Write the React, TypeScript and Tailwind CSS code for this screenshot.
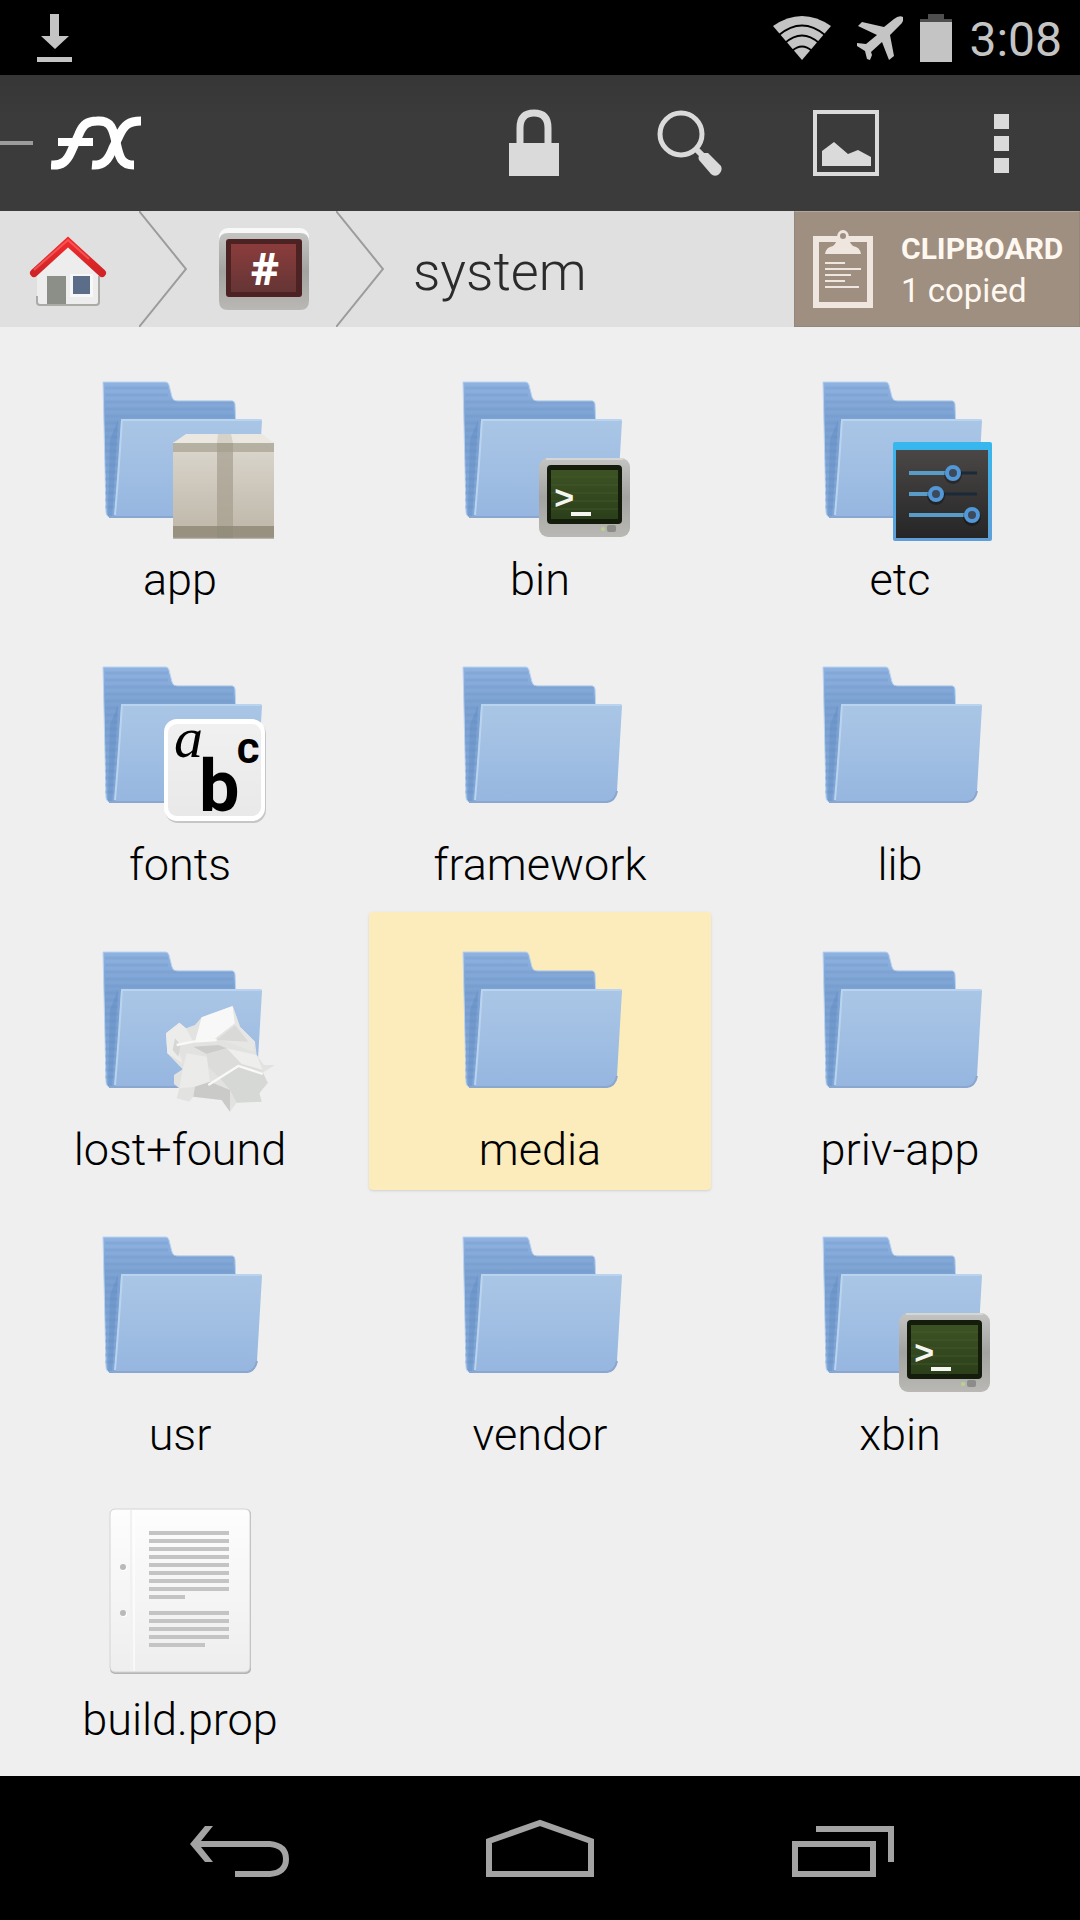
import type { ReactNode } from "react";

type Badge = "box" | "terminal" | "settings" | "fonts" | "paper";

type Entry = {
  name: string;
  badge?: Badge;
  file?: boolean;
  selected?: boolean;
};

const entries: Entry[] = [
  { name: "app", badge: "box" },
  { name: "bin", badge: "terminal" },
  { name: "etc", badge: "settings" },
  { name: "fonts", badge: "fonts" },
  { name: "framework" },
  { name: "lib" },
  { name: "lost+found", badge: "paper" },
  { name: "media", selected: true },
  { name: "priv-app" },
  { name: "usr" },
  { name: "vendor" },
  { name: "xbin", badge: "terminal" },
  { name: "build.prop", file: true },
];

/* ============= Shared gradients ============= */

function Gradients() {
  return (
    <svg className="absolute size-0" aria-hidden="true">
      <defs>
        <linearGradient id="folderBack" x1="0" y1="0" x2="0" y2="1">
          <stop offset="0" stopColor="#8fb2e0" />
          <stop offset="0.3" stopColor="#7aa1d1" />
          <stop offset="1" stopColor="#82a8d8" />
        </linearGradient>
        <linearGradient id="folderFront" x1="0" y1="0" x2="0" y2="1">
          <stop offset="0" stopColor="#aac6e6" />
          <stop offset="0.5" stopColor="#a1bfe3" />
          <stop offset="1" stopColor="#96b6e0" />
        </linearGradient>
        <linearGradient id="cardboard" x1="0" y1="0" x2="0" y2="1">
          <stop offset="0" stopColor="#dcd8ce" />
          <stop offset="0.4" stopColor="#cfc9be" />
          <stop offset="1" stopColor="#bdb6a8" />
        </linearGradient>
        <linearGradient id="bezel" x1="0" y1="0" x2="0" y2="1">
          <stop offset="0" stopColor="#c4c4c2" />
          <stop offset="0.5" stopColor="#a3a3a1" />
          <stop offset="1" stopColor="#b9b8b4" />
        </linearGradient>
        <linearGradient id="greenScreen" x1="0" y1="0" x2="0" y2="1">
          <stop offset="0" stopColor="#3d5224" />
          <stop offset="1" stopColor="#2b401a" />
        </linearGradient>
        <linearGradient id="redScreen" x1="0" y1="0" x2="0" y2="1">
          <stop offset="0" stopColor="#8b3c3c" />
          <stop offset="1" stopColor="#653535" />
        </linearGradient>
        <linearGradient id="panel" x1="0" y1="0" x2="0" y2="1">
          <stop offset="0" stopColor="#4a4746" />
          <stop offset="1" stopColor="#262626" />
        </linearGradient>
        <linearGradient id="panelEdge" x1="0" y1="0" x2="0" y2="1">
          <stop offset="0" stopColor="#35b8ee" />
          <stop offset="1" stopColor="#5f9fd8" />
        </linearGradient>
        <linearGradient id="sheet" x1="0" y1="0" x2="0" y2="1">
          <stop offset="0" stopColor="#fdfdfd" />
          <stop offset="1" stopColor="#eeeeee" />
        </linearGradient>
        <linearGradient id="roof" x1="0" y1="0" x2="0" y2="1">
          <stop offset="0" stopColor="#f02a2c" />
          <stop offset="1" stopColor="#d02426" />
        </linearGradient>
      </defs>
    </svg>
  );
}

/* ============= Folder art ============= */

const folderStripes = [38, 45, 52, 59, 66, 73, 80, 87, 94, 101, 108, 115, 122, 129, 136, 143, 150, 157];

function Folder() {
  return (
    <g>
      <path
        d="M19 32H82Q84 32 85 35L88 47Q89 51 93 51H148Q151 51 151 54L152 80L60 167H27Q22 167 22 162Z"
        fill="url(#folderBack)"
        stroke="#b9d3f0"
        strokeWidth="1"
      />
      {folderStripes.map((y) => (
        <path
          key={y}
          d={`M21 ${y}H${y < 50 ? 84 : y < 70 ? 149 : 34}`}
          stroke="#6990c4"
          strokeOpacity="0.25"
          strokeWidth="3"
        />
      ))}
      <path d="M34 70L28 167H24L26 90Z" fill="#4f7db8" fillOpacity="0.25" />
      <path
        d="M38 69H176Q178 69 178 71L173 156Q172 167 162 167H31Q33 140 37 71Z"
        fill="url(#folderFront)"
      />
      <path d="M31 165Q34 130 38 70H177" fill="none" stroke="#bad3ef" strokeWidth="2" />
      <path d="M25 167H163Q171 166 173 156" fill="none" stroke="#8aa7d0" strokeWidth="2" />
    </g>
  );
}

function BoxBadge() {
  return (
    <g>
      <rect x="89" y="92" width="101" height="96" rx="1" fill="url(#cardboard)" />
      <path d="M102 84H178L190 93H89Z" fill="#ebe8e1" />
      <path d="M134 84H147L149 93H133Z" fill="#d6d2c7" />
      <path d="M133 93H149V188H133Z" fill="#a59e8f" fillOpacity="0.7" />
      <path d="M89 93H190V102H89Z" fill="#a19c8c" fillOpacity="0.65" />
      <path d="M89 176H190V187H89Z" fill="#8b8472" fillOpacity="0.75" />
      <path d="M89 188H190" stroke="#837d6c" strokeWidth="1" />
    </g>
  );
}

function TerminalBadge() {
  return (
    <g>
      <rect x="95" y="108" width="91" height="79" rx="9" fill="url(#bezel)" />
      <path d="M102 109H179" stroke="#d6d6d4" strokeWidth="2" />
      <rect x="103" y="115" width="75" height="59" rx="4" fill="#141c0c" />
      <rect x="107" y="120" width="67" height="49" fill="url(#greenScreen)" />
      <path d="M107 127H174M107 135H174M107 143H174M107 151H174M107 159H174" stroke="#50652f" strokeOpacity="0.5" />
      <text x="110" y="159" fontSize="34" fontWeight="700" fill="#f4f6ef" className="font-['Liberation_Mono',monospace]">
        &gt;
      </text>
      <path d="M127 164H147" stroke="#f4f6ef" strokeWidth="4" />
      <circle cx="159" cy="179" r="2" fill="#b8d48c" />
      <rect x="163" y="175" width="9" height="7" rx="2" fill="#8c8c8a" />
    </g>
  );
}

function SettingsBadge() {
  const sliders = [
    { y: 123, knob: 149 },
    { y: 144, knob: 132 },
    { y: 165, knob: 168 },
  ];
  return (
    <g>
      <rect x="89" y="92" width="99" height="99" rx="2" fill="url(#panelEdge)" />
      <rect x="92" y="100" width="92" height="88" fill="url(#panel)" />
      {sliders.map((s) => (
        <g key={s.y}>
          <path d={`M105 ${s.y}H173`} stroke="#1c2a38" strokeWidth="3" />
          <path d={`M105 ${s.y}H${s.knob}`} stroke="#5a9cc8" strokeWidth="4" />
          <circle cx={s.knob} cy={s.y + 2} r="9" fill="#000" fillOpacity="0.3" />
          <circle cx={s.knob} cy={s.y} r="6" fill="#3c4a5a" stroke="#5298d8" strokeWidth="4" />
        </g>
      ))}
    </g>
  );
}

function FontsBadge() {
  return (
    <g>
      <rect x="81" y="86" width="101" height="102" rx="13" fill="#c4c6ca" />
      <rect x="80" y="84" width="101" height="102" rx="13" fill="#ffffff" />
      <rect x="84" y="89" width="93" height="92" rx="9" fill="url(#sheet)" />
      <rect x="84" y="89" width="93" height="92" rx="9" fill="#e4e4e4" fillOpacity="0.5" />
      <text x="90" y="122" fontSize="58" fontStyle="italic" className="font-['Liberation_Serif',serif]">
        a
      </text>
      <text x="115" y="176" fontSize="72" fontWeight="700" className="font-['Roboto',sans-serif]">
        b
      </text>
      <text x="153" y="128" fontSize="34" fontWeight="900" className="font-['Roboto',sans-serif]">
        C
      </text>
    </g>
  );
}

function PaperBadge() {
  return (
    <g transform="translate(-24 10) scale(0.3333)">
      <path
        d="M318 310L358 278L378 295L405 285L425 262L518 228L540 290L585 335L590 375L612 405L645 405L608 428L625 458L598 490L605 515L560 512L530 518L510 545L485 510L400 500L388 515L350 505L358 475L342 462L342 435L368 418L322 370Z"
        fill="#e2e3e1"
      />
      <path d="M318 310L358 278L378 295L400 335L350 345L368 400L322 370Z" fill="#ececeb" />
      <path d="M345 325L362 345L355 380L338 360Z" fill="#d6d7d5" />
      <path d="M425 262L518 228L525 280L460 330L405 335Z" fill="#f8f8f8" />
      <path d="M518 228L540 290L585 335L580 365L500 335L470 330L525 280Z" fill="#e6e6e4" />
      <path d="M470 330L525 285L565 335Z" fill="#d9dad8" />
      <path d="M400 350L475 345L500 355L440 372Z" fill="#cccdcb" />
      <path d="M440 372L500 355L590 375L608 425L540 405L480 445L445 410Z" fill="#dcdddb" />
      <path d="M500 355L590 375L608 420L545 402Z" fill="#eeeeed" />
      <path d="M480 445L540 408L610 430L622 458L598 490L605 515L530 518L510 480Z" fill="#d6d8d5" />
      <path d="M368 418L380 370L440 380L450 455L405 470L358 475Z" fill="#ebebea" />
      <path d="M405 470L450 455L510 480L510 545L485 510L400 500Z" fill="#cacbc9" />
      <path d="M445 465L535 408L608 432" fill="none" stroke="#f9f9f8" strokeWidth="7" />
      <path d="M350 345L400 335L470 330" fill="none" stroke="#f9f9f8" strokeWidth="7" />
    </g>
  );
}

function DocumentArt() {
  const rows = [
    [43, 145], [51, 145], [59, 145], [67, 145], [75, 145], [83, 145], [91, 145], [99, 145], [107, 101],
    [123, 145], [131, 145], [139, 145], [147, 145], [155, 121],
  ];
  return (
    <g>
      <rect x="26" y="19" width="141" height="165" rx="5" fill="#b4b4b4" />
      <rect x="26" y="19" width="140" height="163" rx="5" fill="url(#sheet)" stroke="#d4d4d4" />
      <path d="M47 20V181" stroke="#f1f1f1" strokeWidth="2" />
      <path d="M50 20V181" stroke="#ffffff" strokeOpacity="0.6" strokeWidth="2" />
      <path d={rows.map(([y, end]) => `M65 ${y}H${end}`).join("")} stroke="#c4c4c4" strokeWidth="4" />
      <circle cx="40" cy="78" r="3" fill="#ffffff" />
      <circle cx="39" cy="77" r="3" fill="#b9b9b9" />
      <circle cx="40" cy="124" r="3" fill="#ffffff" />
      <circle cx="39" cy="123" r="3" fill="#b9b9b9" />
    </g>
  );
}

const badges: Record<Badge, ReactNode> = {
  box: <BoxBadge />,
  terminal: <TerminalBadge />,
  settings: <SettingsBadge />,
  fonts: <FontsBadge />,
  paper: <PaperBadge />,
};

/* ============= Bars ============= */

function StatusBar() {
  return (
    <div className="flex h-[75px] items-center bg-black pr-[18px] pl-[37px] text-[#c4c4c4]">
      <svg viewBox="0 0 36 48" className="h-12 w-9" fill="currentColor" aria-label="Download">
        <path d="M13 0H22V22H32L18 35L4 22H13ZM0 43H35V48H0Z" />
      </svg>
      <svg viewBox="0 0 58 44" className="ml-auto h-11 w-[58px]" aria-label="Wi-Fi">
        <path d="M0 10Q29 -10 58 10L29 44Z" fill="currentColor" />
        <path d="M6 19Q29 0 52 19M12 27Q29 12 46 27M19 35Q29 26 39 35" fill="none" stroke="#000" strokeWidth="2" />
      </svg>
      <svg viewBox="0 0 46 44" className="ml-[26px] h-11 w-[46px]" fill="currentColor" aria-label="Airplane mode">
        <path d="M46 1Q47 6 43 9L33 19L37 40L32 44L25 26L14 36L15 39L13 44L10 43L8 35L0 30V27L9 28L20 19L1 10L5 6L27 11L37 3Q42 -1 46 1Z" />
      </svg>
      <svg viewBox="0 0 32 48" className="ml-[17px] h-12 w-8" aria-label="Battery">
        <path d="M8 0H24V5H32V9H0V5H8Z" fill="#4e4e4e" />
        <path d="M0 8H32V48H0Z" fill="currentColor" />
      </svg>
      <time className="ml-[17px] pt-1 text-[48px] leading-none">3:08</time>
    </div>
  );
}

function ToolButton({ label, children }: { label: string; children: ReactNode }) {
  return (
    <button type="button" aria-label={label} className="flex h-full w-[156px] cursor-pointer items-center justify-center">
      {children}
    </button>
  );
}

function Toolbar() {
  return (
    <header className="flex h-[136px] items-center bg-linear-to-b from-[#363636] to-[#3b3b3b] to-30% text-[#dadada]">
      <button type="button" aria-label="Menu" className="flex h-full cursor-pointer items-center">
        <span className="mr-[18px] h-1 w-[33px] bg-[#9c9c9c]" />
        <svg viewBox="0 0 90 54" className="h-[54px] w-[90px]" fill="none" stroke="#fff" strokeWidth="9">
          <path d="M0 49C11 50 16 45 20 36L28 18C32 8 37 5 46 5C57 4 61 9 64 22C68 38 68 49 83 49" />
          <path d="M41 49C53 50 58 43 62 32L68 20C73 9 78 5 90 5" />
          <path d="M7 26H42" strokeWidth="8" />
        </svg>
      </button>
      <div className="ml-auto flex h-full">
        <ToolButton label="Lock">
          <svg viewBox="0 0 52 68" className="h-[68px] w-[52px]" fill="none">
            <path d="M12 36V19Q12 4 26 4T40 19V36" stroke="currentColor" strokeWidth="7" />
            <path d="M1 34H51V67H1Z" fill="currentColor" />
          </svg>
        </ToolButton>
        <ToolButton label="Search">
          <svg viewBox="0 0 66 66" className="size-[66px]" fill="none" stroke="currentColor">
            <circle cx="24" cy="24" r="21" strokeWidth="5" />
            <path d="M38 38L46 46" strokeWidth="6" />
            <path d="M42 50Q40 45 46 43L51 43L64 56Q66 61 61 65Q57 67 54 64Z" fill="currentColor" stroke="none" />
          </svg>
        </ToolButton>
        <ToolButton label="View">
          <svg viewBox="0 0 66 66" className="size-[66px]" fill="none">
            <rect x="2" y="2" width="62" height="62" stroke="currentColor" strokeWidth="4" />
            <path d="M9 41L21 32L35 44L45 40L58 47V56H9Z" fill="currentColor" />
          </svg>
        </ToolButton>
        <ToolButton label="More options">
          <svg viewBox="0 0 16 60" className="h-[60px] w-4" fill="currentColor">
            <path d="M0 1H15V16H0ZM0 23H15V38H0ZM0 45H15V60H0Z" />
          </svg>
        </ToolButton>
      </div>
    </header>
  );
}

function Chevron() {
  return (
    <svg viewBox="0 0 48 116" className="h-full w-12" fill="none" stroke="#9c9c9c" strokeWidth="2" aria-hidden="true">
      <path d="M0 0L47 58L0 116" />
    </svg>
  );
}

function Breadcrumb() {
  return (
    <nav aria-label="Path" className="flex h-[116px] items-center bg-[#e0e0e0]">
      <button type="button" aria-label="Home" className="w-[139px] cursor-pointer pt-1 pl-[29px]">
        <svg viewBox="0 0 78 70" className="h-[70px] w-[78px]">
          <path d="M8 36L39 7L70 36V66Q70 69 67 69H11Q8 69 8 66Z" fill="#ededed" />
          <path d="M8 60V66Q8 69 11 69H67Q70 69 70 66V40" fill="none" stroke="#a9aba7" strokeWidth="2" />
          <path d="M18 40H37V68H18Z" fill="#8c8e88" />
          <path d="M41 38H64V61H41Z" fill="#f7f7f7" />
          <path d="M44 40H61V58H44Z" fill="#5c6d8a" />
          <path d="M5 37L39 6L73 37" fill="none" stroke="url(#roof)" strokeWidth="8" strokeLinecap="round" />
          <path d="M5 34L39 4L60 23" fill="none" stroke="#ff8080" strokeOpacity="0.5" strokeWidth="2" />
        </svg>
      </button>
      <Chevron />
      <button type="button" aria-label="Root" className="w-[149px] cursor-pointer pl-8">
        <svg viewBox="0 0 90 82" className="h-[82px] w-[90px]">
          <rect width="90" height="80" rx="9" fill="#f8f8f8" />
          <path d="M0 14Q0 5 9 5H81Q90 5 90 14V73Q90 82 81 82H9Q0 82 0 73Z" fill="url(#bezel)" />
          <rect x="7" y="11" width="76" height="58" rx="3" fill="#4d2222" />
          <rect x="12" y="16" width="65" height="48" fill="url(#redScreen)" />
          <text
            x="46"
            y="57"
            fontSize="44"
            fontWeight="700"
            textAnchor="middle"
            fill="#fff"
            className="font-['Open_Sans',sans-serif]"
          >
            #
          </text>
        </svg>
      </button>
      <Chevron />
      <h1 className="ml-[29px] pt-[6px] text-[54px] leading-none font-light text-[#2b2b2b]">system</h1>
      <button
        type="button"
        className="ml-auto flex h-full w-[286px] cursor-pointer items-center border border-[#93877b] border-t-[#b3a79c] bg-[#9f8f81] pl-[18px] text-left text-[#fff8f0]"
      >
        <svg viewBox="0 0 60 78" className="h-[78px] w-[60px] text-[#efe6df]" aria-hidden="true">
          <path d="M3 9H57V75H3Z" fill="none" stroke="currentColor" strokeWidth="6" />
          <path d="M12 24Q13 17 20 16Q24 13 24 7A6 7 0 0 1 36 7Q36 13 40 16Q47 17 48 24Z" fill="currentColor" />
          <circle cx="30" cy="6" r="3" fill="#9f8f81" />
          <path d="M12 33H32M12 39H48M12 45H38M12 51H32M12 57H46" stroke="currentColor" strokeWidth="2" />
        </svg>
        <span className="ml-7 pt-1">
          <span className="block text-[30px] leading-[40px] font-bold">CLIPBOARD</span>
          <span className="block text-[33px] leading-[44px]">1 copied</span>
        </span>
      </button>
    </nav>
  );
}

function EntryTile({ entry }: { entry: Entry }) {
  return (
    <button
      type="button"
      aria-pressed={!!entry.selected}
      className={`flex h-[278px] w-full cursor-pointer flex-col items-center rounded-sm pt-2 ${
        entry.selected ? "bg-[#fdecbb] shadow-sm" : ""
      }`}
    >
      <svg viewBox="0 0 192 192" className="size-48 shrink-0" aria-hidden="true">
        {entry.file ? <DocumentArt /> : <Folder />}
        {entry.badge && badges[entry.badge]}
      </svg>
      <span className="mt-[10px] text-[45px] leading-[56px] font-light text-black">{entry.name}</span>
    </button>
  );
}

function NavigationBar() {
  return (
    <footer className="grid h-36 grid-cols-3 bg-black px-[87px] text-[#a3a3a3]">
      <button type="button" aria-label="Back" className="flex cursor-pointer items-center justify-center pl-1">
        <svg viewBox="0 0 100 58" className="h-[58px] w-[100px]" fill="none">
          <path d="M0 25L15 7H23L11 22H80Q99 24 99 40T80 58H45V52H80Q93 51 93 40T80 28H11L23 43H15Z" fill="currentColor" />
        </svg>
      </button>
      <button type="button" aria-label="Home screen" className="flex cursor-pointer items-center justify-center">
        <svg viewBox="0 0 108 58" className="h-[58px] w-[108px]" fill="none" stroke="currentColor" strokeWidth="6">
          <path d="M3 55V22L54 4L105 22V55Z" />
        </svg>
      </button>
      <button type="button" aria-label="Recent apps" className="flex cursor-pointer items-center justify-center pl-[2px]">
        <svg viewBox="0 0 102 58" className="h-[58px] w-[102px]" fill="none" stroke="currentColor" strokeWidth="6">
          <path d="M3 25H81V55H3ZM24 10H99V43" />
        </svg>
      </button>
    </footer>
  );
}

export default function App() {
  return (
    <div className="flex min-h-screen flex-col bg-[#efefef] font-['Roboto',sans-serif]">
      <Gradients />
      <StatusBar />
      <Toolbar />
      <Breadcrumb />
      <main className="flex-1 px-[9px] pt-[15px]">
        <ul className="grid grid-cols-3 gap-x-[18px] gap-y-[7px]">
          {entries.map((entry) => (
            <li key={entry.name}>
              <EntryTile entry={entry} />
            </li>
          ))}
        </ul>
      </main>
      <NavigationBar />
    </div>
  );
}
